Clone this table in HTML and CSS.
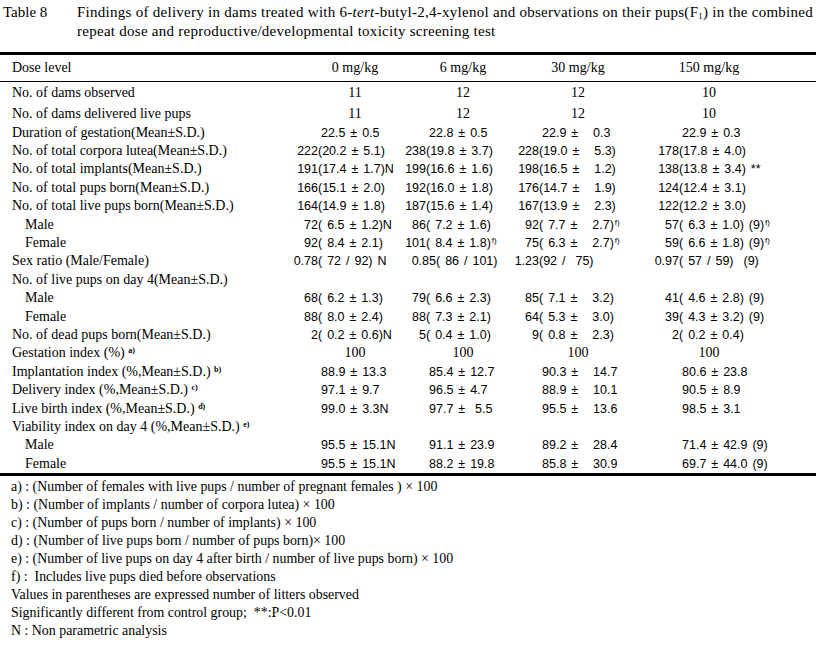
FILE: index.html
```html
<!DOCTYPE html>
<html lang="en">
<head>
<meta charset="utf-8">
<title>Table 8</title>
<link rel="stylesheet" href="styles.css">
</head>
<body>
<div class="page">
  <div class="title">
    <span class="tno">Table 8</span>
    <p class="ttext">Findings of delivery in dams treated with 6-<i>tert</i>-butyl-2,4-xylenol and observations on their pups(F<sub>1</sub>) in the combined<br>repeat dose and reproductive/developmental toxicity screening test</p>
  </div>

  <div class="tbl">
    <div class="row head">
      <span class="lbl">Dose level</span>
      <span class="ctr">0 mg/kg</span>
      <span class="ctr">6 mg/kg</span>
      <span class="ctr">30 mg/kg</span>
      <span class="ctr">150 mg/kg</span>
    </div>

    <div class="row first">
      <span class="lbl">No. of dams observed</span>
      <span class="ctr">11</span><span class="ctr">12</span><span class="ctr">12</span><span class="ctr">10</span>
    </div>
    <div class="row">
      <span class="lbl">No. of dams delivered live pups</span>
      <span class="ctr">11</span><span class="ctr">12</span><span class="ctr">12</span><span class="ctr">10</span>
    </div>
    <div class="row">
      <span class="lbl">Duration of gestation(Mean±S.D.)</span>
      <span class="d m">22.5 ± 0.5</span>
      <span class="d m">22.8 ± 0.5</span>
      <span class="d m">22.9 ±   0.3</span>
      <span class="d m">22.9 ± 0.3</span>
    </div>
    <div class="row">
      <span class="lbl">No. of total corpora lutea(Mean±S.D.)</span>
      <span class="d"><span class="n">222</span>(20.2 ± 5.1)</span>
      <span class="d"><span class="n">238</span>(19.8 ± 3.7)</span>
      <span class="d"><span class="n">228</span>(19.0 ±   5.3)</span>
      <span class="d"><span class="n">178</span>(17.8 ± 4.0)</span>
    </div>
    <div class="row">
      <span class="lbl">No. of total implants(Mean±S.D.)</span>
      <span class="d"><span class="n">191</span>(17.4 ± 1.7)N</span>
      <span class="d"><span class="n">199</span>(16.6 ± 1.6)</span>
      <span class="d"><span class="n">198</span>(16.5 ±   1.2)</span>
      <span class="d"><span class="n">138</span>(13.8 ± 3.4) **</span>
    </div>
    <div class="row">
      <span class="lbl">No. of total pups born(Mean±S.D.)</span>
      <span class="d"><span class="n">166</span>(15.1 ± 2.0)</span>
      <span class="d"><span class="n">192</span>(16.0 ± 1.8)</span>
      <span class="d"><span class="n">176</span>(14.7 ±   1.9)</span>
      <span class="d"><span class="n">124</span>(12.4 ± 3.1)</span>
    </div>
    <div class="row">
      <span class="lbl">No. of total live pups born(Mean±S.D.)</span>
      <span class="d"><span class="n">164</span>(14.9 ± 1.8)</span>
      <span class="d"><span class="n">187</span>(15.6 ± 1.4)</span>
      <span class="d"><span class="n">167</span>(13.9 ±   2.3)</span>
      <span class="d"><span class="n">122</span>(12.2 ± 3.0)</span>
    </div>
    <div class="row sub">
      <span class="lbl">Male</span>
      <span class="d"><span class="n">72</span>( 6.5 ± 1.2)N</span>
      <span class="d"><span class="n">86</span>( 7.2 ± 1.6)</span>
      <span class="d"><span class="n">92</span>( 7.7 ±   2.7)<sup class="fx">f)</sup></span>
      <span class="d"><span class="n">57</span>( 6.3 ± 1.0) (9)<sup class="fx">f)</sup></span>
    </div>
    <div class="row sub">
      <span class="lbl">Female</span>
      <span class="d"><span class="n">92</span>( 8.4 ± 2.1)</span>
      <span class="d"><span class="n">101</span>( 8.4 ± 1.8)<sup class="fx">f)</sup></span>
      <span class="d"><span class="n">75</span>( 6.3 ±   2.7)<sup class="fx">f)</sup></span>
      <span class="d"><span class="n">59</span>( 6.6 ± 1.8) (9)<sup class="fx">f)</sup></span>
    </div>
    <div class="row">
      <span class="lbl">Sex ratio (Male/Female)</span>
      <span class="d"><span class="n">0.78</span>( 72 / 92) N</span>
      <span class="d sx"><span class="n">0.85</span>( 86 / 101)</span>
      <span class="d"><span class="n">1.23</span>(92 /  75)</span>
      <span class="d"><span class="n">0.97</span>( 57 / 59)  (9)</span>
    </div>
    <div class="row">
      <span class="lbl">No. of live pups on day 4(Mean±S.D.)</span>
      <span></span><span></span><span></span><span></span>
    </div>
    <div class="row sub">
      <span class="lbl">Male</span>
      <span class="d"><span class="n">68</span>( 6.2 ± 1.3)</span>
      <span class="d"><span class="n">79</span>( 6.6 ± 2.3)</span>
      <span class="d"><span class="n">85</span>( 7.1 ±   3.2)</span>
      <span class="d"><span class="n">41</span>( 4.6 ± 2.8) (9)</span>
    </div>
    <div class="row sub">
      <span class="lbl">Female</span>
      <span class="d"><span class="n">88</span>( 8.0 ± 2.4)</span>
      <span class="d"><span class="n">88</span>( 7.3 ± 2.1)</span>
      <span class="d"><span class="n">64</span>( 5.3 ±   3.0)</span>
      <span class="d"><span class="n">39</span>( 4.3 ± 3.2) (9)</span>
    </div>
    <div class="row">
      <span class="lbl">No. of dead pups born(Mean±S.D.)</span>
      <span class="d"><span class="n">2</span>( 0.2 ± 0.6)N</span>
      <span class="d"><span class="n">5</span>( 0.4 ± 1.0)</span>
      <span class="d"><span class="n">9</span>( 0.8 ±   2.3)</span>
      <span class="d"><span class="n">2</span>( 0.2 ± 0.4)</span>
    </div>
    <div class="row">
      <span class="lbl">Gestation index (%) <sup class="fl">a)</sup></span>
      <span class="ctr">100</span><span class="ctr">100</span><span class="ctr">100</span><span class="ctr">100</span>
    </div>
    <div class="row">
      <span class="lbl">Implantation index (%,Mean±S.D.) <sup class="fl">b)</sup></span>
      <span class="d m">88.9 ± 13.3</span>
      <span class="d m">85.4 ± 12.7</span>
      <span class="d m">90.3 ±   14.7</span>
      <span class="d m">80.6 ± 23.8</span>
    </div>
    <div class="row">
      <span class="lbl">Delivery index (%,Mean±S.D.) <sup class="fl">c)</sup></span>
      <span class="d m">97.1 ± 9.7</span>
      <span class="d m">96.5 ± 4.7</span>
      <span class="d m">88.9 ±   10.1</span>
      <span class="d m">90.5 ± 8.9</span>
    </div>
    <div class="row">
      <span class="lbl">Live birth index (%,Mean±S.D.) <sup class="fl">d)</sup></span>
      <span class="d m">99.0 ± 3.3N</span>
      <span class="d m">97.7 ±  5.5</span>
      <span class="d m">95.5 ±   13.6</span>
      <span class="d m">98.5 ± 3.1</span>
    </div>
    <div class="row">
      <span class="lbl">Viability index on day 4 (%,Mean±S.D.) <sup class="fl">e)</sup></span>
      <span></span><span></span><span></span><span></span>
    </div>
    <div class="row sub">
      <span class="lbl">Male</span>
      <span class="d m">95.5 ± 15.1N</span>
      <span class="d m">91.1 ± 23.9</span>
      <span class="d m">89.2 ±   28.4</span>
      <span class="d m">71.4 ± 42.9 (9)</span>
    </div>
    <div class="row sub">
      <span class="lbl">Female</span>
      <span class="d m">95.5 ± 15.1N</span>
      <span class="d m">88.2 ± 19.8</span>
      <span class="d m">85.8 ±   30.9</span>
      <span class="d m">69.7 ± 44.0 (9)</span>
    </div>
  </div>

  <ul class="notes">
    <li>a) : (Number of females with live pups / number of pregnant females ) × 100</li>
    <li>b) : (Number of implants / number of corpora lutea) × 100</li>
    <li>c) : (Number of pups born / number of implants) × 100</li>
    <li>d) : (Number of live pups born / number of pups born)× 100</li>
    <li>e) : (Number of live pups on day 4 after birth / number of live pups born) × 100</li>
    <li>f) :  Includes live pups died before observations</li>
    <li>Values in parentheses are expressed number of litters observed</li>
    <li>Significantly different from control group;  **:P&lt;0.01</li>
    <li>N : Non parametric analysis</li>
  </ul>
</div>
</body>
</html>
```

FILE: styles.css
```css
html, body {
  margin: 0;
  padding: 0;
  background: #fff;
}

body {
  color: #000;
  font-family: "Liberation Serif", "Times New Roman", serif;
  font-size: 14px;
}

.page {
  width: 816px;
}

/* ---------- title ---------- */
.title {
  display: flex;
  height: 52px;
  box-sizing: border-box;
  padding: 3px 0 0 3px;
  line-height: 19px;
  font-size: 15px;
}

.tno {
  flex: none;
  width: 74px;
}

.ttext {
  margin: 0;
  white-space: nowrap;
  letter-spacing: 0.27px;
}

.ttext sub {
  font-size: 9px;
  vertical-align: -2px;
  line-height: 0;
}

/* ---------- table ---------- */
.tbl {
  border-top: 3px solid #000;
  border-bottom: 3px solid #000;
}

.row {
  display: grid;
  grid-template-columns: 297px 108px 113px 140px 158px;
  align-items: center;
  height: 18.42px;
  line-height: 18px;
}

.row.head {
  height: 26px;
  border-bottom: 1px solid #000;
}

.row.first {
  margin-top: 2px;
  margin-bottom: 2.5px;
}

.lbl {
  padding-left: 12px;
  white-space: nowrap;
}

.row.sub .lbl {
  padding-left: 25px;
}

.ctr {
  text-align: center;
}

.row > .ctr:nth-child(2) { padding-left: 8px; }
.row > .ctr:nth-child(3) { padding-left: 3px; }
.row > .ctr:nth-child(4) { padding-right: 20px; }
.row > .ctr:nth-child(5) { padding-right: 56px; }

.d {
  font-family: "Liberation Sans", Arial, sans-serif;
  font-size: 12.5px;
  word-spacing: 1.5px;
  white-space: pre;
}

.d.m {
  padding-left: 24px;
}

.d.sx {
  padding-left: 10px;
}

.n {
  display: inline-flex;
  justify-content: flex-end;
  width: 21px;
}

.fx {
  font-size: 8px;
  line-height: 0;
  vertical-align: 4px;
  margin-left: 1px;
  word-spacing: 0;
}

.fl {
  font-size: 8px;
  line-height: 0;
  vertical-align: 4px;
  font-weight: bold;
}

/* ---------- footnotes ---------- */
.notes {
  list-style: none;
  margin: 0;
  padding: 2px 0 0 11px;
  line-height: 18px;
  font-size: 13.9px;
}

.notes li {
  white-space: pre;
}
```
